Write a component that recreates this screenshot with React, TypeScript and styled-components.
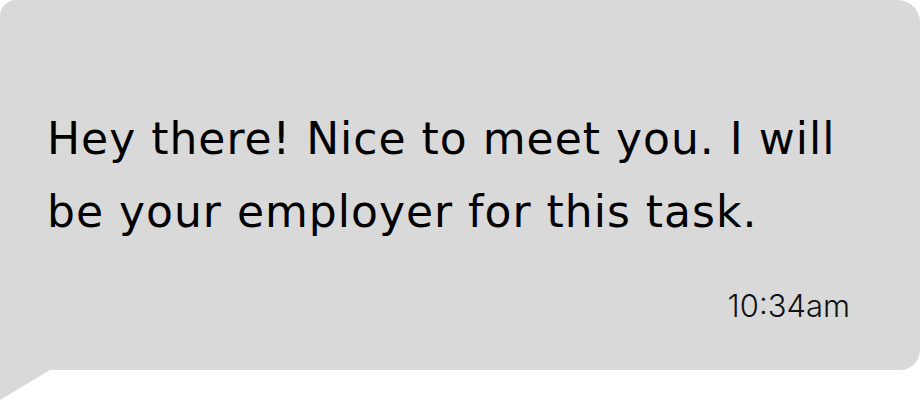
import React from "react";
import styled, { createGlobalStyle } from "styled-components";

const Global = createGlobalStyle`
  html, body { margin: 0; padding: 0; background: #ffffff; }
  body { width: 920px; height: 400px; overflow: hidden; }
`;

const Page = styled.div`
  width: 920px;
  height: 400px;
  display: flex;
  flex-direction: column;
`;

const Bubble = styled.div`
  position: relative;
  box-sizing: border-box;
  width: 920px;
  height: 370px;
  background: #d9d9d9;
  border-radius: 16px 22px 20px 0;
  display: flex;
  flex-direction: column;
  padding: 102px 70px 0 47px;
  color: #000;

  &::after {
    content: "";
    position: absolute;
    left: 0;
    top: 100%;
    width: 50px;
    height: 30px;
    background: #d9d9d9;
    clip-path: polygon(0 0, 100% 0, 0 100%);
  }
`;

const Message = styled.p`
  margin: 0;
  font-family: "DejaVu Sans", Inter, sans-serif;
  font-size: 44px;
  line-height: 73px;
  font-weight: 400;
  letter-spacing: 1px;
`;

const Time = styled.span`
  align-self: flex-end;
  margin-top: 40px;
  font-family: Inter, "Liberation Sans", sans-serif;
  font-size: 31px;
  font-weight: 300;
  line-height: 36px;
  color: #111;
`;

export default function App() {
  return (
    <Page>
      <Global />
      <Bubble>
        <Message>
          Hey there! Nice to meet you. I will
          <br />
          be your employer for this task.
        </Message>
        <Time>10:34am</Time>
      </Bubble>
    </Page>
  );
}
